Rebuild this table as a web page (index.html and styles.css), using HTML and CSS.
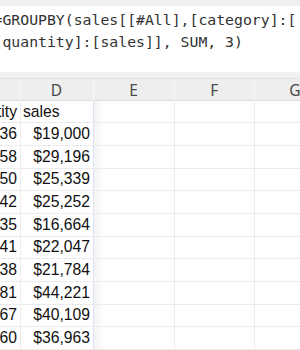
FILE: index.html
```html
<!DOCTYPE html>
<html>
<head>
<meta charset="utf-8">
<link rel="stylesheet" href="styles.css">
</head>
<body>
<div class="app">
  <div class="top-strip"></div>
  <div class="formula">
    <div class="fline">=GROUPBY(sales[[#All],[category]:[</div>
    <div class="fline">[quantity]:[sales]], SUM, 3)</div>
  </div>
  <div class="gap"></div>
  <div class="sheet">
    <div class="row head">
      <div class="c colC"></div>
      <div class="c colD">D</div>
      <div class="c colE">E</div>
      <div class="c colF">F</div>
      <div class="c colG">G</div>
    </div>
    <div class="row">
      <div class="c colC r">quantity</div>
      <div class="c colD l">sales</div>
      <div class="c colE"></div>
      <div class="c colF"></div>
      <div class="c colG"></div>
    </div>
    <div class="row"><div class="c colC r">36</div><div class="c colD r">$19,000</div><div class="c colE"></div><div class="c colF"></div><div class="c colG"></div></div>
    <div class="row"><div class="c colC r">58</div><div class="c colD r">$29,196</div><div class="c colE"></div><div class="c colF"></div><div class="c colG"></div></div>
    <div class="row"><div class="c colC r">50</div><div class="c colD r">$25,339</div><div class="c colE"></div><div class="c colF"></div><div class="c colG"></div></div>
    <div class="row"><div class="c colC r">42</div><div class="c colD r">$25,252</div><div class="c colE"></div><div class="c colF"></div><div class="c colG"></div></div>
    <div class="row"><div class="c colC r">35</div><div class="c colD r">$16,664</div><div class="c colE"></div><div class="c colF"></div><div class="c colG"></div></div>
    <div class="row"><div class="c colC r">41</div><div class="c colD r">$22,047</div><div class="c colE"></div><div class="c colF"></div><div class="c colG"></div></div>
    <div class="row"><div class="c colC r">38</div><div class="c colD r">$21,784</div><div class="c colE"></div><div class="c colF"></div><div class="c colG"></div></div>
    <div class="row"><div class="c colC r">81</div><div class="c colD r">$44,221</div><div class="c colE"></div><div class="c colF"></div><div class="c colG"></div></div>
    <div class="row"><div class="c colC r">67</div><div class="c colD r">$40,109</div><div class="c colE"></div><div class="c colF"></div><div class="c colG"></div></div>
    <div class="row"><div class="c colC r">60</div><div class="c colD r">$36,963</div><div class="c colE"></div><div class="c colF"></div><div class="c colG"></div></div>
  </div>
</div>
</body>
</html>
```
FILE: styles.css
```css
html, body {
  margin: 0;
  padding: 0;
  background: #ffffff;
}
.app {
  width: 300px;
  height: 350px;
  overflow: hidden;
  display: flex;
  flex-direction: column;
}
.top-strip {
  height: 6px;
  flex: none;
  background: #efefef;
}
.formula {
  height: 66px;
  flex: none;
  background: #ffffff;
  padding-top: 3px;
  box-sizing: border-box;
  overflow: hidden;
}
.fline {
  font-family: "DejaVu Sans Mono", monospace;
  font-size: 14.8px;
  line-height: 22px;
  color: #333333;
  white-space: nowrap;
  margin-left: -6.5px;
}
.gap {
  height: 7px;
  flex: none;
  background: #f1f1f1;
  border-bottom: 1px solid #e2e2e2;
  box-sizing: border-box;
}
.sheet {
  flex: none;
  display: flex;
  flex-direction: column;
}
.row {
  display: grid;
  grid-template-columns: 20.5px 73px 81px 80.5px 81px;
  height: 22.67px;
  flex: none;
  box-sizing: border-box;
  border-bottom: 1px solid #ececec;
}
.row.head {
  height: 21.7px;
  background: #eeeeee;
  border-bottom: 1px solid #dedede;
}
.c {
  display: flex;
  align-items: center;
  white-space: nowrap;
  font-family: "Liberation Sans", Arial, sans-serif;
  font-size: 15.7px;
  color: #111111;
  box-sizing: border-box;
  border-right: 1px solid #ececec;
  min-width: 0;
}
.head .c {
  justify-content: center;
  font-family: "Noto Sans", sans-serif;
  font-size: 15.5px;
  color: #4a4a4a;
  border-right: 1px solid #f7f7f7;
}
.r {
  justify-content: flex-end;
  padding-right: 2.5px;
}
.l {
  justify-content: flex-start;
  padding-left: 2.5px;
}
.row:not(.head) .colD {
  border-right: 1.5px solid #dce1f3;
}
.row:not(.head) .colE {
  background: linear-gradient(to right, #f3f3f3, #ffffff 10px);
}
```
